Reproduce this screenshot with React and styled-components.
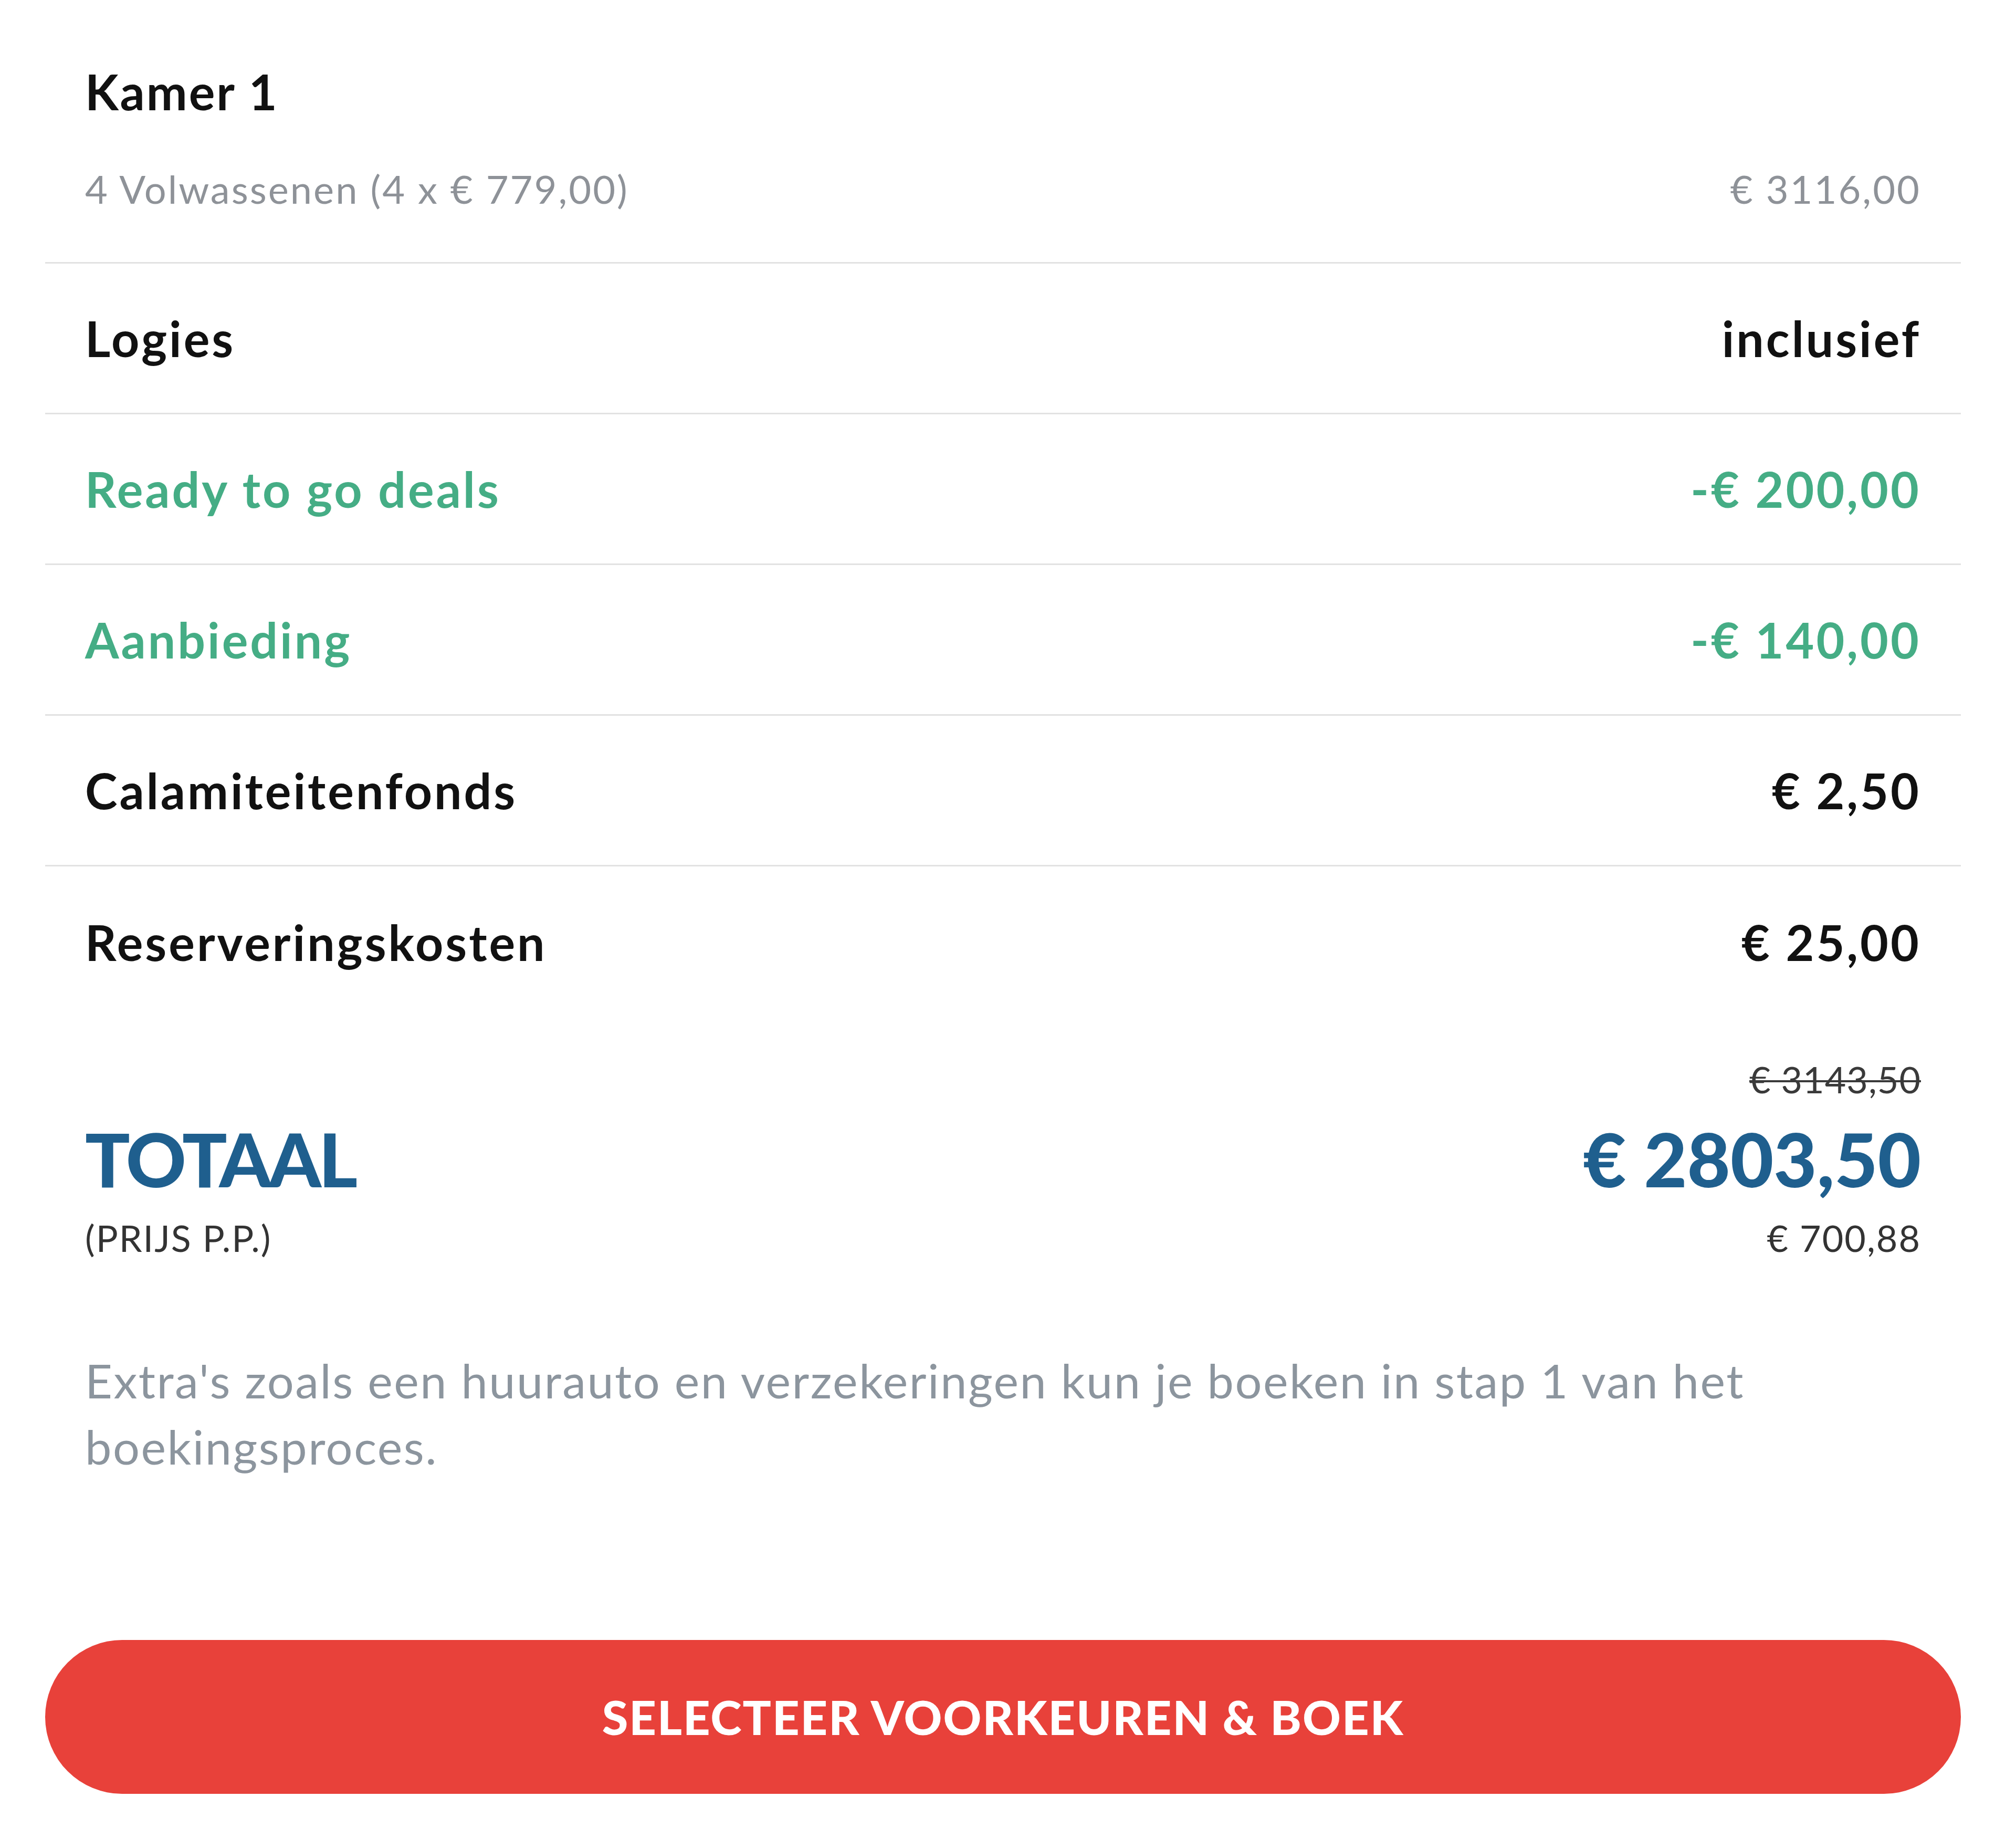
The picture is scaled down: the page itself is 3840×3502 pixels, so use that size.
import styled, { createGlobalStyle } from 'styled-components';

const GlobalStyle = createGlobalStyle`
  * {
    box-sizing: border-box;
  }

  body {
    margin: 0;
    background: #fff;
    font-family: Lato, 'Noto Sans', sans-serif;
    color: #111;
  }
`;

const Page = styled.div`
  display: flex;
  flex-direction: column;
  width: 3840px;
  height: 3502px;
  padding: 0 105px 0 86px;
`;

const Header = styled.div`
  display: flex;
  flex-direction: column;
  gap: 85px;
  padding: 119px 76px 95px;
  border-bottom: 3px solid #e2e2e2;
`;

const RoomTitle = styled.h2`
  margin: 0;
  font-size: 93px;
  line-height: 1.2;
  font-weight: 700;
  letter-spacing: 3px;
`;

const SubRow = styled.div`
  display: flex;
  justify-content: space-between;
  font-size: 74px;
  line-height: 1.2;
  letter-spacing: 3px;
  color: #8e9298;
`;

const Row = styled.div`
  display: flex;
  align-items: center;
  justify-content: space-between;
  height: 287px;
  padding: 0 76px;
  font-size: 93px;
  font-weight: 700;
  letter-spacing: 4px;
  color: ${(props) => (props.$discount ? '#45ad85' : '#111')};
  border-bottom: ${(props) => (props.$last ? 'none' : '3px solid #e2e2e2')};
`;

const Totals = styled.div`
  display: flex;
  align-items: flex-end;
  justify-content: space-between;
  margin-top: 76px;
  padding: 0 76px;
`;

const Column = styled.div`
  display: flex;
  flex-direction: column;
  align-items: ${(props) => (props.$right ? 'flex-end' : 'flex-start')};
`;

const OldPrice = styled.span`
  font-size: 70px;
  line-height: 1.2;
  letter-spacing: 1px;
  color: #3a3a3a;
  text-decoration: line-through;
  text-decoration-thickness: 4px;
`;

const Big = styled.span`
  margin: 24px 0 23px;
  font-size: 142px;
  line-height: 1.2;
  font-weight: 900;
  letter-spacing: ${(props) => (props.$tight ? '-5px' : '0')};
  color: #1f5f8e;
`;

const Small = styled.span`
  font-size: 70px;
  line-height: 1.2;
  letter-spacing: 2px;
  color: #333;
`;

const Note = styled.p`
  margin: 166px 0 0;
  padding: 0 76px;
  max-width: 3420px;
  font-size: 90px;
  line-height: 126px;
  letter-spacing: 2.5px;
  color: #8c959e;
`;

const BookButton = styled.button`
  display: flex;
  align-items: center;
  justify-content: center;
  height: 293px;
  margin-top: 306px;
  border: none;
  border-radius: 150px;
  background: #e8413a;
  color: #fff;
  font-family: Lato, sans-serif;
  font-size: 90px;
  font-weight: 900;
  letter-spacing: 2px;
`;

const rows = [
  { label: 'Logies', value: 'inclusief' },
  { label: 'Ready to go deals', value: '-€ 200,00', discount: true },
  { label: 'Aanbieding', value: '-€ 140,00', discount: true },
  { label: 'Calamiteitenfonds', value: '€ 2,50' },
  { label: 'Reserveringskosten', value: '€ 25,00' },
];

const App = () => {
  return (
    <>
      <GlobalStyle />
      <Page>
        <Header>
          <RoomTitle>Kamer 1</RoomTitle>
          <SubRow>
            <span>4 Volwassenen (4 x € 779,00)</span>
            <span>€ 3116,00</span>
          </SubRow>
        </Header>
        {rows.map((row, i) => (
          <Row key={row.label} $discount={row.discount} $last={i === rows.length - 1}>
            <span>{row.label}</span>
            <span>{row.value}</span>
          </Row>
        ))}
        <Totals>
          <Column>
            <Big $tight>TOTAAL</Big>
            <Small>(PRIJS P.P.)</Small>
          </Column>
          <Column $right>
            <OldPrice>€ 3143,50</OldPrice>
            <Big>€ 2803,50</Big>
            <Small>€ 700,88</Small>
          </Column>
        </Totals>
        <Note>
          Extra's zoals een huurauto en verzekeringen kun je boeken in stap 1 van het
          boekingsproces.
        </Note>
        <BookButton>SELECTEER VOORKEUREN &amp; BOEK</BookButton>
      </Page>
    </>
  );
};

export default App;
